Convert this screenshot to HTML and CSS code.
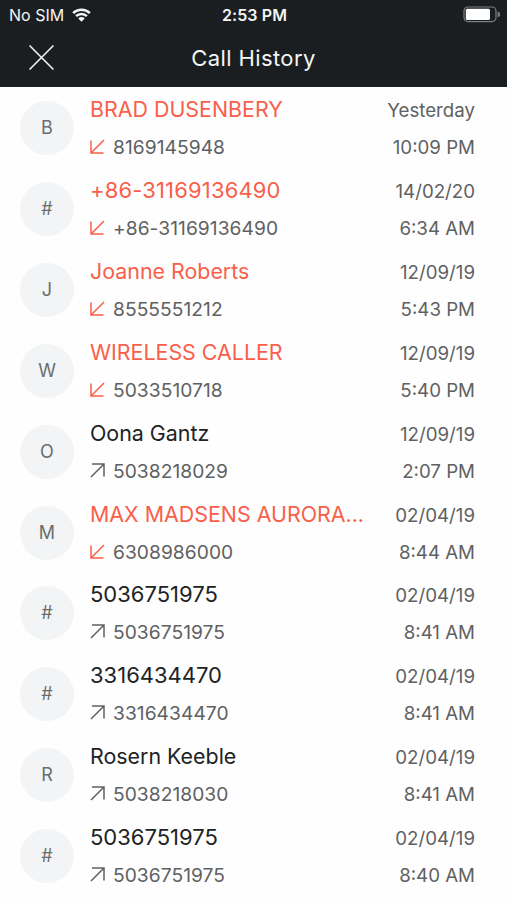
FILE: index.html
```html
<!DOCTYPE html>
<html lang="en">
<head>
  <meta charset="UTF-8">
  <meta name="viewport" content="width=device-width, initial-scale=1.0">
  <title>Call History</title>
  <link rel="stylesheet" href="styles.css">
</head>
<body>
  <svg class="sprite">
    <symbol id="incoming" viewBox="0 0 15 15">
      <path d="M14 1L1.5 13.5M1 1.5V14H13.5"/>
    </symbol>
    <symbol id="outgoing" viewBox="0 0 15 15">
      <path d="M1 14L13.5 1.5M2 1H14V13.5"/>
    </symbol>
  </svg>

  <header>
    <div class="status">
      <div class="carrier">
        <span>No SIM</span>
        <svg class="wifi" viewBox="0 0 20 14">
          <path d="M1.2 5.1A12.6 12.6 0 0 1 18.8 5.1M4.3 8.3A8.1 8.1 0 0 1 15.7 8.3"/>
          <path class="dot" d="M10 14L6.6 10.6A4.8 4.8 0 0 1 13.4 10.6Z"/>
        </svg>
      </div>
      <span class="clock">2:53 PM</span>
      <svg class="battery" viewBox="0 0 37 17">
        <rect class="shell" x="1" y="1" width="32" height="14.6" rx="4"/>
        <rect class="level" x="2.8" y="2.7" width="24.2" height="11.2" rx="1.5"/>
        <path class="tip" d="M34.6 5.8A2.6 2.6 0 0 1 34.6 11Z"/>
      </svg>
    </div>
    <div class="titlebar">
      <svg class="close" viewBox="0 0 26 26">
        <path d="M1.5 1.5L24.5 24.5M24.5 1.5L1.5 24.5"/>
      </svg>
      <h1>Call History</h1>
    </div>
  </header>

  <ul class="calls">
    <li class="missed">
      <span class="avatar">B</span>
      <div class="info">
        <div class="line"><h2>BRAD DUSENBERY</h2><span>Yesterday</span></div>
        <div class="line"><p><svg><use href="#incoming"/></svg>8169145948</p><span>10:09 PM</span></div>
      </div>
    </li>
    <li class="missed">
      <span class="avatar">#</span>
      <div class="info">
        <div class="line"><h2 class="number">+86-31169136490</h2><span>14/02/20</span></div>
        <div class="line"><p><svg><use href="#incoming"/></svg>+86-31169136490</p><span>6:34 AM</span></div>
      </div>
    </li>
    <li class="missed">
      <span class="avatar">J</span>
      <div class="info">
        <div class="line"><h2>Joanne Roberts</h2><span>12/09/19</span></div>
        <div class="line"><p><svg><use href="#incoming"/></svg>8555551212</p><span>5:43 PM</span></div>
      </div>
    </li>
    <li class="missed">
      <span class="avatar">W</span>
      <div class="info">
        <div class="line"><h2>WIRELESS CALLER</h2><span>12/09/19</span></div>
        <div class="line"><p><svg><use href="#incoming"/></svg>5033510718</p><span>5:40 PM</span></div>
      </div>
    </li>
    <li>
      <span class="avatar">O</span>
      <div class="info">
        <div class="line"><h2>Oona Gantz</h2><span>12/09/19</span></div>
        <div class="line"><p><svg><use href="#outgoing"/></svg>5038218029</p><span>2:07 PM</span></div>
      </div>
    </li>
    <li class="missed">
      <span class="avatar">M</span>
      <div class="info">
        <div class="line"><h2>MAX MADSENS AURORA...</h2><span>02/04/19</span></div>
        <div class="line"><p><svg><use href="#incoming"/></svg>6308986000</p><span>8:44 AM</span></div>
      </div>
    </li>
    <li>
      <span class="avatar">#</span>
      <div class="info">
        <div class="line"><h2 class="number">5036751975</h2><span>02/04/19</span></div>
        <div class="line"><p><svg><use href="#outgoing"/></svg>5036751975</p><span>8:41 AM</span></div>
      </div>
    </li>
    <li>
      <span class="avatar">#</span>
      <div class="info">
        <div class="line"><h2 class="number">3316434470</h2><span>02/04/19</span></div>
        <div class="line"><p><svg><use href="#outgoing"/></svg>3316434470</p><span>8:41 AM</span></div>
      </div>
    </li>
    <li>
      <span class="avatar">R</span>
      <div class="info">
        <div class="line"><h2>Rosern Keeble</h2><span>02/04/19</span></div>
        <div class="line"><p><svg><use href="#outgoing"/></svg>5038218030</p><span>8:41 AM</span></div>
      </div>
    </li>
    <li>
      <span class="avatar">#</span>
      <div class="info">
        <div class="line"><h2 class="number">5036751975</h2><span>02/04/19</span></div>
        <div class="line"><p><svg><use href="#outgoing"/></svg>5036751975</p><span>8:40 AM</span></div>
      </div>
    </li>
  </ul>
</body>
</html>
```
FILE: styles.css
```css
* {
  margin: 0;
  padding: 0;
  box-sizing: border-box;
  list-style-type: none;
}

body {
  font-family: Inter, "Liberation Sans", sans-serif;
  color: #5f6162;
  background-color: #fefefe;
  height: 900px;
  overflow: hidden;
}

svg {
  display: block;
  flex: none;
  fill: none;
  stroke: currentColor;
}

.sprite {
  display: none;
}

header {
  height: 87px;
  color: #f4f5f5;
  background-color: #1a1e20;
}

.status {
  display: grid;
  grid-template-columns: 1fr auto 1fr;
  align-items: center;
  height: 29px;
  padding: 0 7px 0 9px;
  font-size: 16px;
}

.carrier {
  display: flex;
  align-items: center;
  gap: 8px;
}

.wifi {
  width: 19px;
  height: 14px;
  stroke-width: 2.6;
}

.wifi .dot {
  fill: currentColor;
  stroke: none;
}

.clock {
  font-weight: 600;
  letter-spacing: 0.1px;
}

.battery {
  width: 37px;
  height: 17px;
  justify-self: end;
}

.battery .shell {
  stroke: #7c7f80;
  stroke-width: 1.2;
}

.battery .level {
  fill: #fff;
  stroke: none;
}

.battery .tip {
  fill: #7c7f80;
  stroke: none;
}

.titlebar {
  display: grid;
  grid-template-columns: 1fr auto 1fr;
  align-items: center;
  height: 56px;
  padding: 0 28px;
}

.close {
  width: 27px;
  height: 27px;
  stroke-width: 1.5;
}

.titlebar h1 {
  font-size: 22px;
  font-weight: 400;
  line-height: 28px;
  letter-spacing: 0.4px;
  padding-top: 1px;
}

.calls {
  padding-top: 1px;
}

.calls li {
  display: flex;
  align-items: center;
  gap: 16px;
  height: 80.85px;
  padding: 0 32px 0 20px;
}

.avatar {
  flex: none;
  width: 54px;
  height: 54px;
  border-radius: 50%;
  background-color: #f2f4f5;
  font-size: 18px;
  color: #6b6d6e;
  line-height: 54px;
  text-align: center;
}

.info {
  flex: 1;
}

.line {
  display: flex;
  justify-content: space-between;
  align-items: baseline;
  height: 38px;
  line-height: 38px;
  font-size: 18.7px;
  white-space: nowrap;
}

.line h2 {
  font-size: 21.4px;
  font-weight: 400;
  color: #202325;
}

.line .number {
  font-size: 22px;
}

.line p {
  display: flex;
  align-items: baseline;
  gap: 8px;
  font-size: 19.2px;
  letter-spacing: 0.05px;
}

.line svg {
  width: 15px;
  height: 15px;
  stroke-width: 1.5;
}

.missed h2,
.missed svg {
  color: #f95f4a;
}

.missed .number {
  letter-spacing: 0.15px;
}
```
